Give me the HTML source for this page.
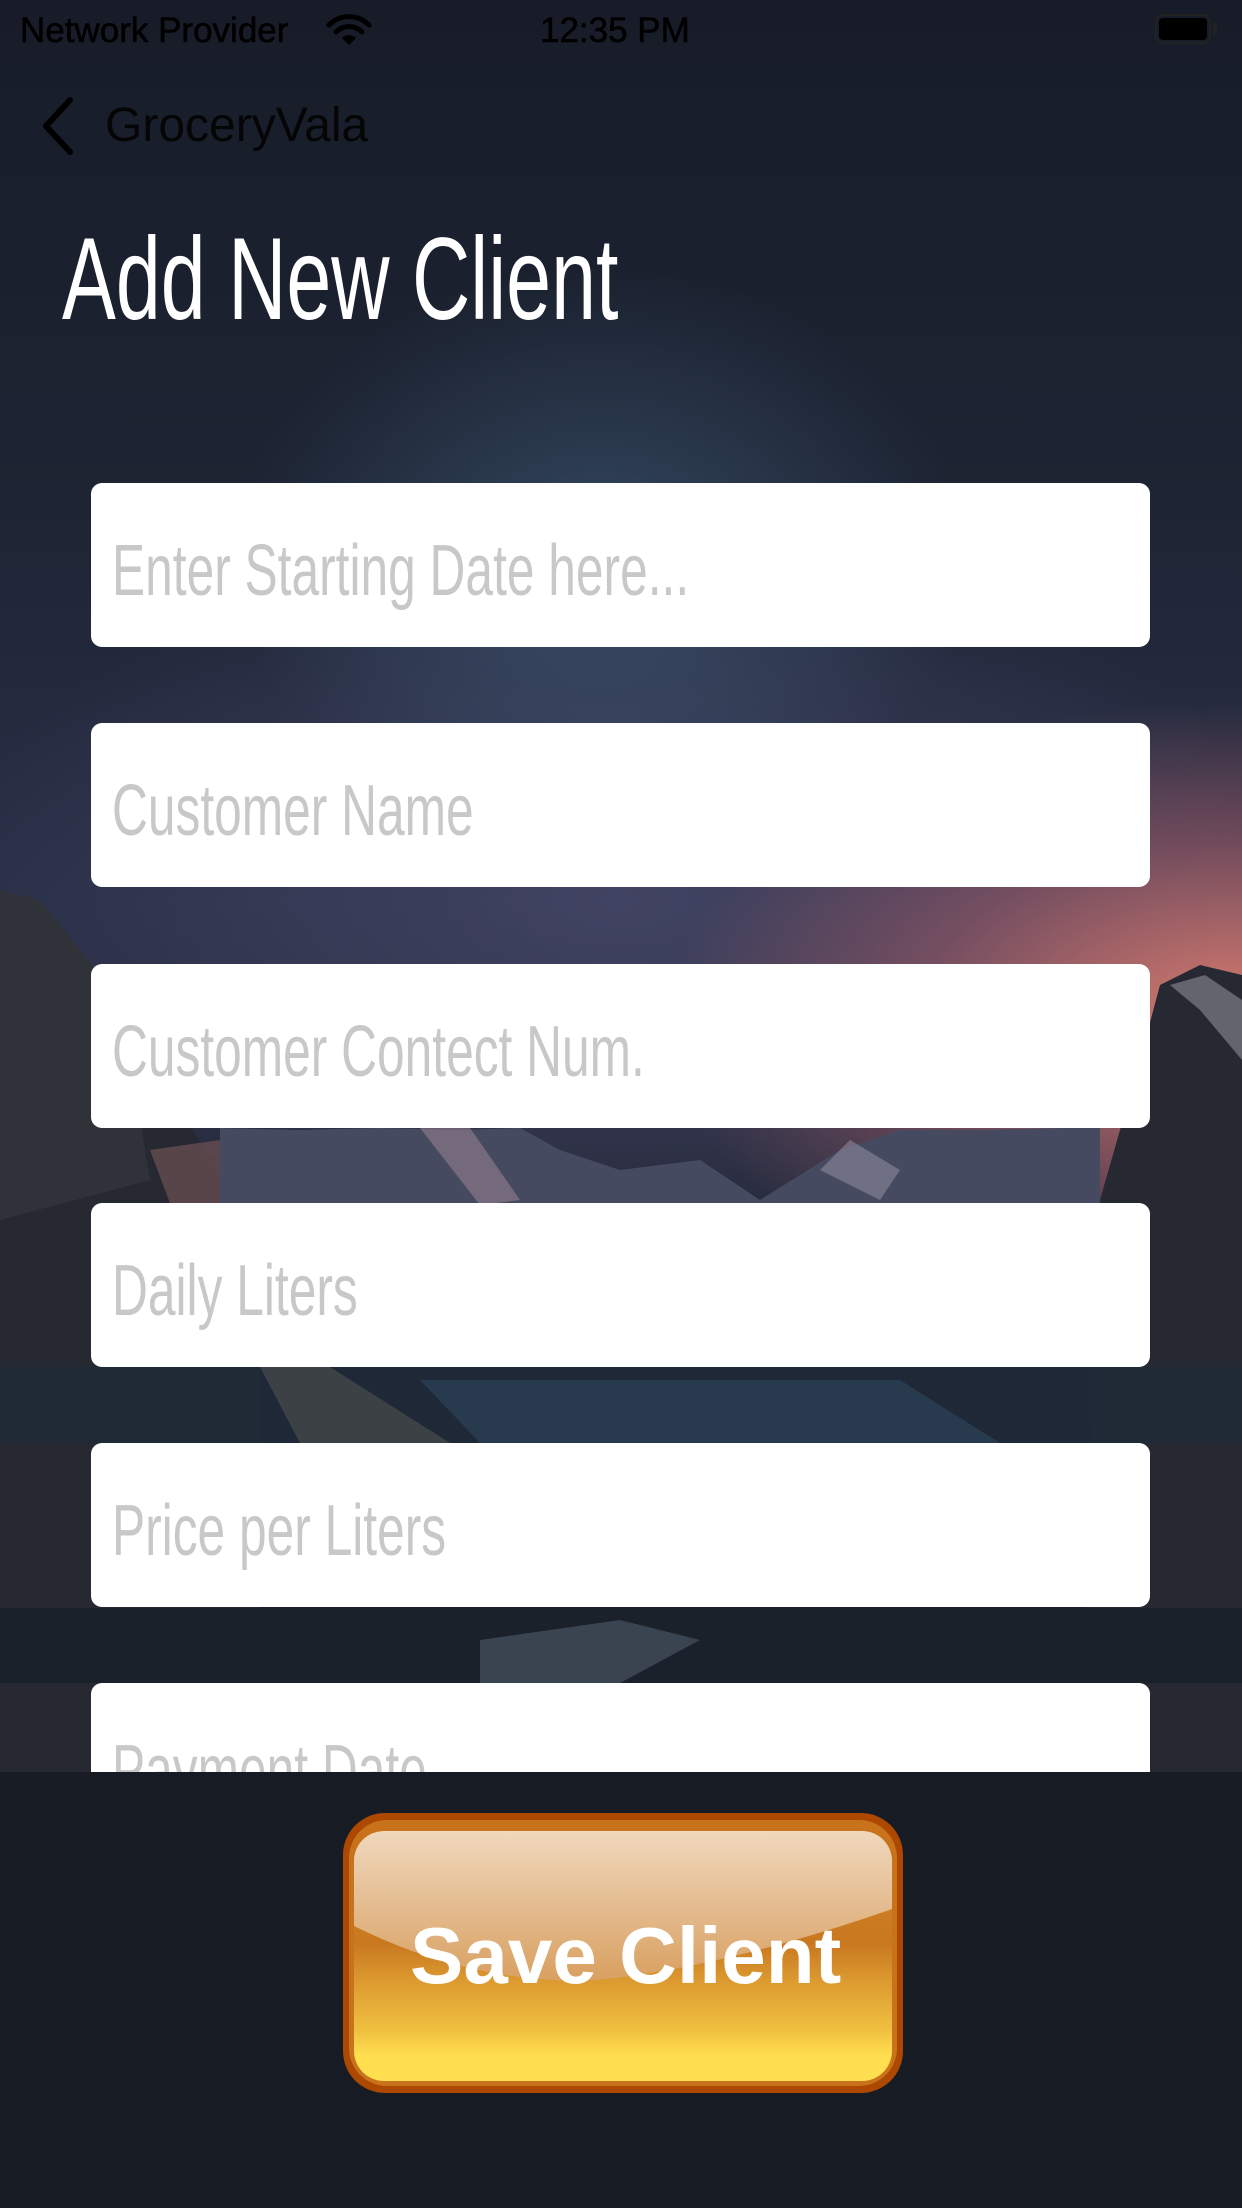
<!DOCTYPE html>
<html><head><meta charset="utf-8"><style>
html,body{margin:0;padding:0}
body{width:1242px;height:2208px;position:relative;overflow:hidden;font-family:"Liberation Sans",sans-serif;
background:#171c27;}
.bg{position:absolute;inset:0;
background:
radial-gradient(ellipse 520px 420px at 600px 560px, rgba(70,100,130,.55), rgba(70,100,130,0) 70%),
radial-gradient(ellipse 720px 400px at 1242px 1020px, rgba(230,130,115,.95), rgba(180,100,110,.5) 45%, rgba(90,70,100,0) 80%),
radial-gradient(ellipse 900px 500px at 620px 900px, rgba(80,80,115,.6), rgba(60,60,90,0) 75%),
linear-gradient(#171c28 0px,#1d2433 500px,#2a3048 900px,#262a3c 1150px,#1b2230 1350px,#171d27 1800px,#131820 2208px);}
.t{position:absolute;white-space:nowrap}
.field{position:absolute;left:91px;width:1059px;height:164px;background:#fff;border-radius:11px;overflow:hidden}
.ph{position:absolute;left:21px;top:52px;font-size:72px;color:#c8c8c8;transform:scaleX(.69);transform-origin:left top;white-space:nowrap;line-height:1}
</style></head><body>
<div class="bg"></div>
<svg style="position:absolute;left:0;top:0" width="1242" height="2208">
 <polygon points="0,890 40,900 120,1000 180,1110 230,1190 260,1230 260,1780 0,1780" fill="#262932"/>
 <polygon points="0,890 40,900 120,1000 150,1180 0,1220" fill="#33343c" opacity=".8"/>
 <polygon points="150,1150 220,1140 300,1200 260,1250 180,1230" fill="#7a5858" opacity=".6"/>
 <polygon points="1160,985 1200,965 1242,975 1242,1780 1080,1780 1100,1200 1140,1060" fill="#262832"/>
 <polygon points="1170,985 1205,975 1242,1000 1242,1060 1200,1010" fill="#8e8c98" opacity=".6"/>
 <polygon points="220,1128 300,1130 380,1128 460,1130 520,1128 560,1150 620,1170 700,1160 760,1200 840,1150 900,1130 980,1130 1060,1128 1100,1128 1100,1210 220,1210" fill="#454a60"/>
 <polygon points="420,1128 470,1128 520,1200 480,1205" fill="#a58a96" opacity=".5"/>
 <polygon points="820,1170 850,1140 900,1170 880,1200" fill="#9a96a8" opacity=".5"/>
 <rect x="0" y="1367" width="1242" height="76" fill="#1f2a38" opacity=".8"/>
 <polygon points="260,1367 330,1367 450,1443 300,1443" fill="#6a6660" opacity=".4"/>
 <polygon points="420,1380 900,1380 1000,1443 480,1443" fill="#2c4258" opacity=".7"/>
 <rect x="0" y="1608" width="1242" height="75" fill="#1a212b"/>
 <polygon points="480,1640 620,1620 700,1640 620,1683 480,1683" fill="#5a6878" opacity=".5"/>
 <rect x="0" y="1772" width="1242" height="436" fill="#161b24"/>
</svg>

<div class="t" style="left:20px;top:11px;font-size:35px;color:#000;-webkit-text-stroke:.6px #000">Network Provider</div>
<svg style="position:absolute;left:325px;top:14px" width="48" height="32" viewBox="0 0 48 32">
 <path d="M4 11 A28 28 0 0 1 44 11" stroke="#000" stroke-width="5" fill="none" stroke-linecap="round"/>
 <path d="M11 18 A18 18 0 0 1 37 18" stroke="#000" stroke-width="5" fill="none" stroke-linecap="round"/>
 <path d="M17 24 L24 31 L31 24 A10 10 0 0 0 17 24Z" fill="#000"/>
</svg>
<div class="t" style="left:540px;top:11px;font-size:35px;color:#000;-webkit-text-stroke:.6px #000">12:35 PM</div>
<div style="position:absolute;left:1155px;top:14px;width:56px;height:30px;border:2px solid #222;border-radius:8px;box-sizing:border-box"></div>
<div style="position:absolute;left:1159px;top:18px;width:48px;height:22px;background:#000;border-radius:4px"></div>
<div style="position:absolute;left:1213px;top:23px;width:4px;height:11px;background:#222;border-radius:0 2px 2px 0"></div>

<svg style="position:absolute;left:38px;top:96px" width="40" height="60" viewBox="0 0 40 60">
 <path d="M32 4 L8 30 L32 56" stroke="#000" stroke-width="6" fill="none" stroke-linecap="round" stroke-linejoin="round"/>
</svg>
<div class="t" style="left:105px;top:98px;font-size:48px;color:#050505">GroceryVala</div>

<div class="t" style="left:62px;top:220px;font-size:117px;color:#fff;transform:scaleX(.69);transform-origin:left top;line-height:1">Add New Client</div>

<div class="field" style="top:483px"><div class="ph">Enter Starting Date here...</div></div>
<div class="field" style="top:723px"><div class="ph">Customer Name</div></div>
<div class="field" style="top:964px"><div class="ph">Customer Contect Num.</div></div>
<div class="field" style="top:1203px"><div class="ph">Daily Liters</div></div>
<div class="field" style="top:1443px"><div class="ph">Price per Liters</div></div>
<div class="field" style="top:1683px;height:89px;border-radius:11px 11px 0 0"><div class="ph">Payment Date</div></div>

<div style="position:absolute;left:343px;top:1813px;width:560px;height:280px;background:#ad4800;border-radius:42px"></div>
<div style="position:absolute;left:349px;top:1820px;width:548px;height:266px;background:#c8731c;border-radius:38px"></div>
<div style="position:absolute;left:354px;top:1831px;width:538px;height:250px;border-radius:30px;overflow:hidden;
background:linear-gradient(#d5852a 0%,#c97820 45%,#dc9a30 60%,#f0c040 80%,#ffdf50 90%,#ffdf50 100%)">
 <svg style="position:absolute;left:0;top:0" width="538" height="250">
  <defs><linearGradient id="g" x1="0" y1="0" x2="0" y2="1"><stop offset="0" stop-color="#f0d8bc"/><stop offset=".5" stop-color="#e4bc90"/><stop offset="1" stop-color="#d9a060"/></linearGradient></defs>
  <path d="M0 0 H538 V78 Q360 140 230 150 Q110 150 0 95Z" fill="url(#g)"/>
 </svg>
</div>
<div class="t" style="left:410px;top:1916px;font-size:80px;font-weight:bold;color:#fff;line-height:1">Save Client</div>
</body></html>
